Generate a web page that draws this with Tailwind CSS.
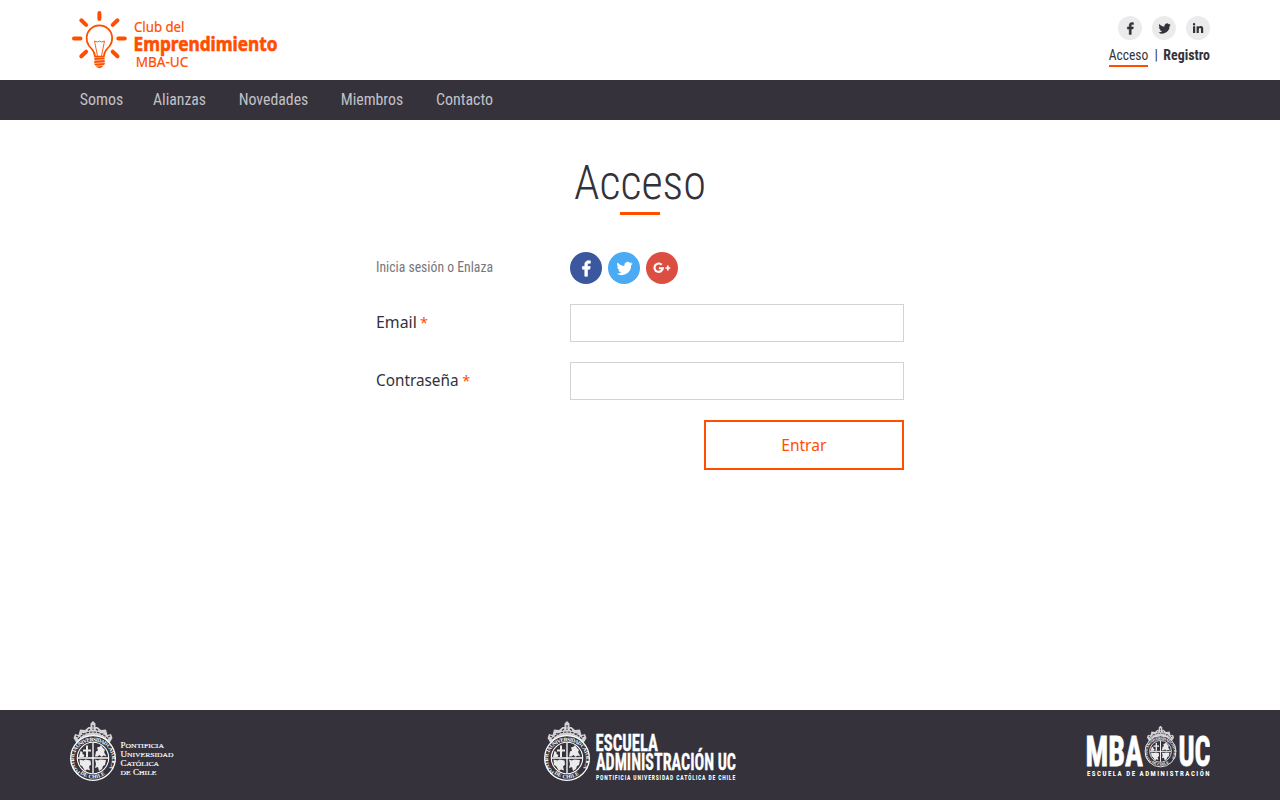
<!DOCTYPE html>
<html lang="es">
<head>
<meta charset="utf-8">
<title>Acceso</title>
<script src="https://cdn.jsdelivr.net/npm/@tailwindcss/browser@4"></script>
</head>
<body class="bg-white font-['Roboto_Condensed','Roboto',sans-serif] text-[#33313a]">
<svg width="0" height="0" class="absolute">
  <defs>
    <path id="fb" stroke-width=".9" d="M13.400 23V13h3.300l.6-3.900h-3.900V6.700c0-1.200.5-2 2.100-2h2V1.200C17 1.100 16 1 14.800 1 11.700 1 9.600 2.800 9.600 6v3.100H6.200V13h3.400v10z"/>
    <path id="tw" d="M23.600 4.900c-.8.4-1.700.6-2.700.7 1-.6 1.700-1.500 2-2.600-.9.500-1.900.9-3 1.100a4.700 4.700 0 0 0-8 4.300C8 8.200 4.600 6.300 2.300 3.500a4.700 4.700 0 0 0 1.500 6.300c-.8 0-1.500-.2-2.100-.6 0 2.300 1.600 4.200 3.700 4.700-.7.200-1.400.2-2.100.1a4.700 4.700 0 0 0 4.400 3.200A9.500 9.500 0 0 1 .7 19.200 13.400 13.400 0 0 0 21.300 7.300c.9-.6 1.700-1.500 2.300-2.400z"/>
    <symbol id="seal" viewBox="0 0 46 60">
      <g fill="#fff" fill-opacity=".78">
        <path d="M7.500 24 3.500 17l1.500-4 3.500 1L10 8.500l5 .5 3.500-3 2 0V2.500L23 0l2.500 2.500V6h2l3.500 3 5-.5L37.500 14l3.500-1 1.500 4-4 7Q31 14.500 23 14.500T7.500 24z"/>
      </g>
      <path d="M8 18q6-7 15-7t15 7M12 12.500l3 1M31 13.500l3-1M18 9.500l2-1.500M26 8l2 1.500M23 4v5M6 15l2 1M38 16l2-1" fill="none" stroke="#35323b" stroke-width="1.100" stroke-dasharray="2.500 1"/>
      <circle cx="23" cy="37" r="22.300" fill="#35323b" stroke="#fff" stroke-width="1.200"/>
      <g fill="none" stroke="#fff">
        <circle cx="23" cy="37" r="15.700" stroke-width="1.100"/>
        <path d="M23 22v30M8 37h30" stroke-width="1.300"/>
      </g>
      <path id="ring" d="M10.300 51.100a19 17.700 0 1 1 25.400 0" fill="none"/>
      <path id="ringb" d="M10 52.800a20.500 20.500 0 0 0 26 0" fill="none"/>
      <g font-family="Liberation Serif" font-weight="700" font-size="5.400" fill="#fff">
        <text textLength="82"><textPath href="#ring">PONTIFICIA UNIVERSIDAD CATÓLICA</textPath></text>
        <text textLength="27"><textPath href="#ringb">DE CHILE</textPath></text>
      </g>
      <g fill="#fff" fill-opacity=".9">
        <path d="M16 24.500h2v4h3v2h-3V36h-2v-5.500h-3v-2h3zM10.500 30l2 1v2l2 1-1 2H9z"/>
        <path d="m25 35.500 1-5 2-1-1-3 3-1 1-1.500 2 3 2 2-1 2 2.500 4.500-3-1-2 1.500-2-2-2 1.500z"/>
        <path d="m9.500 38.500 4 1 2-1 5 1 .5 4-2 2 1 4-3-1-2 1.500-3-5-2-1z"/>
        <path d="m25 38.500 3 1 2-1 6 .5-1 5-2 1-1 3-3 2-1-4-3 1 1-4z"/>
      </g>
    </symbol>
  </defs>
</svg>
<div class="flex h-[800px] w-[1280px] flex-col">
  <header class="flex h-20 justify-between px-[70px]">
    <svg class="h-20 w-[212px]" viewBox="70 0 212 80" fill="#ff4e00">
      <g fill="none" stroke="#ff4e00" stroke-width="4" stroke-linecap="round">
        <path d="M99.400 13v6M74 38.500h6.500M118.300 38.500h6.500M81.300 20.300l4.800 4.600M117.500 20.300l-4.800 4.600M81.300 56.300l4.800-4.600M117.500 56.300l-4.800-4.600"/>
        <path stroke-width="1.700" d="M95 56.500c-.2-6-3.500-7.500-6-10.800a12.800 12.800 0 1 1 20.800 0c-2.500 3.300-5.800 4.800-6 10.800z"/>
        <path stroke-width=".9" d="M97.500 56 94.500 41l3 1 2-1 2 1 3-1-3 15"/>
      </g>
      <path d="M94.500 57.500h10l.3 6.500-2.800 3.300-2.500 1-2.700-1-2.700-3.300z"/>
      <path d="M94 60.500l11-1M94 63.500l11-1M95 66.200l9-.9" stroke="#fff" stroke-width=".6"/>
      <g font-family="Noto Sans">
        <text x="134" y="31.700" font-size="13.800" stroke="#ff4e00" stroke-width=".2" textLength="50.500" lengthAdjust="spacingAndGlyphs">Club del</text>
        <text x="133.500" y="50.700" font-size="19" font-weight="700" stroke="#ff4e00" stroke-width=".6" textLength="144" lengthAdjust="spacingAndGlyphs">Emprendimiento</text>
        <text x="135.800" y="67" font-size="13.500" stroke="#ff4e00" stroke-width=".2" textLength="52.500" lengthAdjust="spacingAndGlyphs">MBA-UC</text>
      </g>
    </svg>
    <div class="flex flex-col items-end pt-4">
      <div class="flex gap-2.5">
        <a class="flex size-6 items-center justify-center rounded-full bg-[#ebebeb]"><svg class="size-[13px]" viewBox="0 0 24 24" fill="#33313a" stroke="#33313a"><use href="#fb"/></svg></a>
        <a class="flex size-6 items-center justify-center rounded-full bg-[#ebebeb]"><svg class="size-[13px]" viewBox="0 0 24 24" fill="#33313a"><use href="#tw"/></svg></a>
        <a class="flex size-6 items-center justify-center rounded-full bg-[#ebebeb]"><svg class="h-3 w-3" viewBox="0 0 12 12" fill="#33313a"><path d="M1 4.200h2.200V11H1zM2.100 1a1.200 1.200 0 1 1 0 2.400 1.200 1.200 0 0 1 0-2.400M4.600 4.200h2.100v.9c.4-.7 1.100-1.100 2-1.100 1.900 0 2.500 1.200 2.500 3V11H9V7.500c0-.9-.2-1.600-1-1.600S6.800 6.500 6.800 7.400V11H4.600z"/></svg></a>
      </div>
      <svg class="h-8 w-[102px]" viewBox="1108 40 102 32" fill="#33313a" font-size="14">
        <text x="1108.700" y="60.300" textLength="39.500" lengthAdjust="spacingAndGlyphs">Acceso</text>
        <path d="M1109 65h39v2h-39z" fill="#ff4e00"/>
        <text x="1154.500" y="60">|</text>
        <text x="1163.300" y="60.300" font-weight="700" textLength="46.700" lengthAdjust="spacingAndGlyphs">Registro</text>
      </svg>
    </div>
  </header>
  <nav class="h-10 bg-[#35323b] px-[70px]">
    <svg class="h-10 w-[440px]" viewBox="70 80 440 40" fill="#c2c1c6" font-size="16">
      <text x="79.700" y="105.200" textLength="43.500" lengthAdjust="spacingAndGlyphs">Somos</text>
      <text x="153" y="105.200" textLength="53" lengthAdjust="spacingAndGlyphs">Alianzas</text>
      <text x="238.700" y="105.200" textLength="69.600" lengthAdjust="spacingAndGlyphs">Novedades</text>
      <text x="340.700" y="105.200" textLength="62.500" lengthAdjust="spacingAndGlyphs">Miembros</text>
      <text x="436" y="105.200" textLength="57" lengthAdjust="spacingAndGlyphs">Contacto</text>
    </svg>
  </nav>
  <main class="flex flex-1 flex-col items-center">
    <h1 class="h-[132px]"><svg class="h-[100px] w-[140px]" viewBox="570 120 140 100">
      <text x="574" y="199.300" font-size="48" font-weight="300" fill="#33313a" textLength="132" lengthAdjust="spacingAndGlyphs">Acceso</text>
      <path d="M620 212h40v3h-40z" fill="#ff4e00"/>
    </svg></h1>
    <form class="flex w-[528px] flex-col gap-5">
      <div class="flex h-8">
        <svg class="h-8 w-[194px]" viewBox="376 252 194 32"><text x="376" y="272.200" font-size="14" fill="#77767b" textLength="117" lengthAdjust="spacingAndGlyphs">Inicia sesión o Enlaza</text></svg>
        <div class="flex gap-1.5">
          <a class="flex size-8 items-center justify-center rounded-full bg-[#3b579d]"><svg class="size-[17px]" viewBox="0 0 24 24" fill="#fff" stroke="#fff"><use href="#fb"/></svg></a>
          <a class="flex size-8 items-center justify-center rounded-full bg-[#4aabf4]"><svg class="size-[17px]" viewBox="0 0 24 24" fill="#fff"><use href="#tw"/></svg></a>
          <a class="flex size-8 items-center justify-center rounded-full bg-[#dc4e41]"><svg class="size-[18px]" viewBox="0 0 18 18" fill="none" stroke="#fff"><path d="M8.700 5.700a4.200 4.200 0 1 0 1.200 3.500H5.900" stroke-width="2.100"/><path d="M14.800 6.600v4.800M12.400 9h4.800" stroke-width="1.700"/></svg></a>
        </div>
      </div>
      <label class="flex h-[38px]">
        <svg class="h-[38px] w-[194px]" viewBox="376 304 194 38" font-family="Noto Sans" font-size="15.500"><text x="376" y="328.300" fill="#33313a" textLength="40.800" lengthAdjust="spacingAndGlyphs">Email</text><text x="420" y="327.500" font-size="14.500" fill="#ff4e00">*</text></svg>
        <input class="h-[38px] w-[334px] border border-[#d3d3d3] px-3">
      </label>
      <label class="flex h-[38px]">
        <svg class="h-[38px] w-[194px]" viewBox="376 362 194 38" font-family="Noto Sans" font-size="15.500"><text x="376" y="386.300" fill="#33313a" textLength="82.500" lengthAdjust="spacingAndGlyphs">Contraseña</text><text x="462.300" y="385.500" font-size="14.500" fill="#ff4e00">*</text></svg>
        <input type="password" class="h-[38px] w-[334px] border border-[#d3d3d3] px-3">
      </label>
      <button type="button" class="h-[50px] w-[200px] self-end border-2 border-[#ff4e00]">
        <svg class="h-[46px] w-[196px]" viewBox="706 422 196 46"><text x="781.300" y="451.400" font-family="Noto Sans" font-size="15.500" fill="#ff4e00" textLength="45" lengthAdjust="spacingAndGlyphs">Entrar</text></svg>
      </button>
    </form>
  </main>
  <footer class="flex h-[90px] bg-[#35323b] px-[70px]">
    <svg class="h-[90px] w-[110px]" viewBox="70 710 110 90" fill="#fff">
      <use href="#seal" x="70" y="721" width="46" height="60"/>
      <g font-family="Liberation Serif" stroke="#fff" stroke-width=".15">
        <text x="120.500" y="748" font-size="8.300" textLength="43.500" lengthAdjust="spacingAndGlyphs">P<tspan font-size="7">ONTIFICIA</tspan></text>
        <text x="120.500" y="757" font-size="8.300" textLength="53" lengthAdjust="spacingAndGlyphs">U<tspan font-size="7">NIVERSIDAD</tspan></text>
        <text x="120.500" y="766" font-size="8.300" textLength="38.500" lengthAdjust="spacingAndGlyphs">C<tspan font-size="7">ATÓLICA</tspan></text>
        <text x="120.500" y="775" font-size="8.300" textLength="36" lengthAdjust="spacingAndGlyphs"><tspan font-size="7">DE</tspan> C<tspan font-size="7">HILE</tspan></text>
      </g>
    </svg>
    <svg class="ml-[364px] h-[90px] w-[194px]" viewBox="544 710 194 90" fill="#fff" font-weight="700">
      <use href="#seal" x="544" y="721" width="46" height="60"/>
      <g stroke="#fff" stroke-width=".3">
        <text x="595.500" y="750.500" font-size="23" textLength="62.500" lengthAdjust="spacingAndGlyphs">ESCUELA</text>
        <text x="596" y="770" font-size="23" textLength="140" lengthAdjust="spacingAndGlyphs">ADMINISTRACIÓN UC</text>
      </g>
      <text x="596" y="779.700" font-size="7" letter-spacing="1" textLength="140" lengthAdjust="spacingAndGlyphs">PONTIFICIA UNIVERSIDAD CATÓLICA DE CHILE</text>
    </svg>
    <svg class="ml-auto h-[90px] w-[126px]" viewBox="1084 710 126 90" fill="#fff" font-weight="700">
      <use href="#seal" x="1144.500" y="725" width="32" height="43"/>
      <text x="1085.500" y="765.500" font-size="42.500" stroke="#fff" stroke-width=".8" textLength="57.500" lengthAdjust="spacingAndGlyphs">MBA</text>
      <text x="1178.500" y="765.500" font-size="42.500" stroke="#fff" stroke-width=".8" textLength="32" lengthAdjust="spacingAndGlyphs">UC</text>
      <text x="1087" y="775.700" font-size="7" letter-spacing="1.500" textLength="124" lengthAdjust="spacingAndGlyphs">ESCUELA DE ADMINISTRACIÓN</text>
    </svg>
  </footer>
</div>
</body>
</html>
